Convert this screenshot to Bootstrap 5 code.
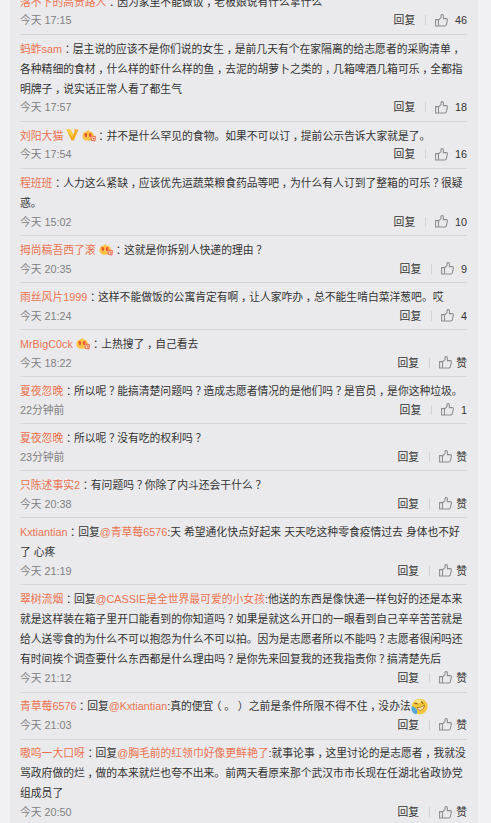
<!DOCTYPE html>
<html lang="zh-CN">
<head>
<meta charset="utf-8">
<meta name="viewport" content="width=device-width, initial-scale=1">
<title>评论</title>
<link href="https://cdn.jsdelivr.net/npm/bootstrap@5.3.0/dist/css/bootstrap.min.css" rel="stylesheet">
<style>
html,body{height:823px;overflow:hidden}
body{background:#f1f1f3;color:#333;font:10.8px/20.1px "Liberation Sans","Noto Sans CJK SC",sans-serif}
.feed{width:468px;height:823px;margin-left:10px;padding:0 11px 0 10px;background:#eaeaec;overflow:hidden}
.comments{margin-top:-13px}
.comment{border-top:1px solid #d6d6d9;padding:3.5px 0 5px;white-space:nowrap}
.comment p{line-height:20.1px}
.comment a{color:#eb7350;text-decoration:none}
/* punctuation: half-width glyph in the middle of a full cell */
.comment i{display:inline-block;width:1em;line-height:1;text-align:center;font-style:normal;font-feature-settings:"halt"}
.comment i.stop{text-align:left}
.meta{height:17.42px;line-height:18px}
.meta time{color:#808080}
.sep{width:1px;height:10px;background:#d3d3d6;margin:0 8.5px 0 10px}
.thumb{width:13px;height:13px;fill:none;stroke:#8c8c8c;stroke-width:1.05}
.num{margin-left:7.3px}
.zan{margin-left:4.7px}
.vip{width:13px;height:12px;margin:0 -.8px 0 2.7px;vertical-align:-1.5px}
.flag{width:14px;height:13px;margin-left:3.6px;vertical-align:-2px}
.emoji{width:17px;height:17px;vertical-align:-4.5px}
</style>
</head>
<body>
<svg class="d-none" xmlns="http://www.w3.org/2000/svg">
<symbol id="like" viewBox="0 0 13 13"><path d="M.6 5.6h2.9v6.3H.6zM3.5 6L6 3.6V1.4Q6.2.6 7.1.6 8.4.7 8.4 2.2V4.6h2.9q1.3.1 1.1 1.3l-1 4.8q-.3 1.2-1.4 1.2H3.5"/></symbol>
<symbol id="vmark" viewBox="0 0 12 12"><path fill="#f7a916" d="M0 .5h4.2L6.5 6l1.7-3.3L7.4.5H12L7.2 11.5H5z"/><path fill="#ffcb42" d="M0 .5h4.2L6.5 6 5.8 9z"/></symbol>
<symbol id="badge-hot" viewBox="0 0 15 13"><path fill="#ffc34a" d="M5.4 2L6.6.4 7.8 2q5 .5 5 5.2 0 5-6.2 5T.4 7.2Q.6 2.4 5.4 2z"/><path fill="#e95431" d="M2.8 4q1.6-.8 2.7.8.4 2.8-1 3.6-2-.6-1.7-4.4zM7.4 4.8q1.2-1.5 2.6-.7.4 3-1.4 4.3-1.6-.8-1.2-3.6z"/><path fill="#fff0ce" stroke="#ed5a40" d="M9.3 7.2l5 .3-.4 4.9-3.7-.6z"/><path fill="none" stroke="#e8463a" d="M11 9l2 .5-.3 1.5"/></symbol>
</svg>
<main class="feed">
<div class="comments">
<article class="comment"><p class="m-0"><a href="#">落不下的高贵路人</a><i>：</i>因为家里不能做饭<i>，</i>老板娘说有什么拿什么</p>
<div class="meta d-flex align-items-center"><time class="me-auto">今天 17:15</time><span>回复</span><span class="sep"></span><svg class="thumb"><use href="#like"/></svg><span class="num">46</span></div></article>
<article class="comment"><p class="m-0"><a href="#">蚂蚱sam</a><i>：</i>层主说的应该不是你们说的女生<i>，</i>是前几天有个在家隔离的给志愿者的采购清单<i>，</i><br>各种精细的食材<i>，</i>什么样的虾什么样的鱼<i>，</i>去泥的胡萝卜之类的<i>，</i>几箱啤酒几箱可乐<i>，</i>全都指<br>明牌子<i>，</i>说实话正常人看了都生气</p>
<div class="meta d-flex align-items-center"><time class="me-auto">今天 17:57</time><span>回复</span><span class="sep"></span><svg class="thumb"><use href="#like"/></svg><span class="num">18</span></div></article>
<article class="comment"><p class="m-0"><a href="#">刘阳大猫</a><svg class="vip"><use href="#vmark"/></svg><svg class="flag"><use href="#badge-hot"/></svg><i>：</i>并不是什么罕见的食物。如果不可以订<i>，</i>提前公示告诉大家就是了。</p>
<div class="meta d-flex align-items-center"><time class="me-auto">今天 17:54</time><span>回复</span><span class="sep"></span><svg class="thumb"><use href="#like"/></svg><span class="num">16</span></div></article>
<article class="comment"><p class="m-0"><a href="#">程班班</a><i>：</i>人力这么紧缺<i>，</i>应该优先运蔬菜粮食药品等吧<i>，</i>为什么有人订到了整箱的可乐<i>？</i>很疑<br>惑。</p>
<div class="meta d-flex align-items-center"><time class="me-auto">今天 15:02</time><span>回复</span><span class="sep"></span><svg class="thumb"><use href="#like"/></svg><span class="num">10</span></div></article>
<article class="comment"><p class="m-0"><a href="#">拇尚稿吾西了滚</a><svg class="flag"><use href="#badge-hot"/></svg><i>：</i>这就是你拆别人快递的理由<i>？</i></p>
<div class="meta d-flex align-items-center"><time class="me-auto">今天 20:35</time><span>回复</span><span class="sep"></span><svg class="thumb"><use href="#like"/></svg><span class="num">9</span></div></article>
<article class="comment"><p class="m-0"><a href="#">雨丝风片1999</a><i>：</i>这样不能做饭的公寓肯定有啊<i>，</i>让人家咋办<i>，</i>总不能生啃白菜洋葱吧。哎</p>
<div class="meta d-flex align-items-center"><time class="me-auto">今天 21:24</time><span>回复</span><span class="sep"></span><svg class="thumb"><use href="#like"/></svg><span class="num">4</span></div></article>
<article class="comment"><p class="m-0"><a href="#">MrBigC0ck</a><svg class="flag"><use href="#badge-hot"/></svg><i>：</i>上热搜了<i>，</i>自己看去</p>
<div class="meta d-flex align-items-center"><time class="me-auto">今天 18:22</time><span>回复</span><span class="sep"></span><svg class="thumb"><use href="#like"/></svg><span class="zan">赞</span></div></article>
<article class="comment"><p class="m-0"><a href="#">夏夜忽晚</a><i>：</i>所以呢<i>？</i>能搞清楚问题吗<i>？</i>造成志愿者情况的是他们吗<i>？</i>是官员<i>，</i>是你这种垃圾。</p>
<div class="meta d-flex align-items-center"><time class="me-auto">22分钟前</time><span>回复</span><span class="sep"></span><svg class="thumb"><use href="#like"/></svg><span class="num">1</span></div></article>
<article class="comment"><p class="m-0"><a href="#">夏夜忽晚</a><i>：</i>所以呢<i>？</i>没有吃的权利吗<i>？</i></p>
<div class="meta d-flex align-items-center"><time class="me-auto">23分钟前</time><span>回复</span><span class="sep"></span><svg class="thumb"><use href="#like"/></svg><span class="zan">赞</span></div></article>
<article class="comment"><p class="m-0"><a href="#">只陈述事实2</a><i>：</i>有问题吗<i>？</i>你除了内斗还会干什么<i>？</i></p>
<div class="meta d-flex align-items-center"><time class="me-auto">今天 20:38</time><span>回复</span><span class="sep"></span><svg class="thumb"><use href="#like"/></svg><span class="zan">赞</span></div></article>
<article class="comment"><p class="m-0"><a href="#">Kxtiantian</a><i>：</i>回复<a href="#">@青草莓6576</a>:天 希望通化快点好起来 天天吃这种零食疫情过去 身体也不好<br>了 心疼</p>
<div class="meta d-flex align-items-center"><time class="me-auto">今天 21:19</time><span>回复</span><span class="sep"></span><svg class="thumb"><use href="#like"/></svg><span class="zan">赞</span></div></article>
<article class="comment"><p class="m-0"><a href="#">翠树流烟</a><i>：</i>回复<a href="#">@CASSIE是全世界最可爱的小女孩</a>:他送的东西是像快递一样包好的还是本来<br>就是这样装在箱子里开口能看到的你知道吗<i>？</i>如果是就这么开口的一眼看到自己辛辛苦苦就是<br>给人送零食的为什么不可以抱怨为什么不可以拍。因为是志愿者所以不能吗<i>？</i>志愿者很闲吗还<br>有时间挨个调查要什么东西都是什么理由吗<i>？</i>是你先来回复我的还我指责你<i>？</i>搞清楚先后</p>
<div class="meta d-flex align-items-center"><time class="me-auto">今天 21:12</time><span>回复</span><span class="sep"></span><svg class="thumb"><use href="#like"/></svg><span class="zan">赞</span></div></article>
<article class="comment"><p class="m-0"><a href="#">青草莓6576</a><i>：</i>回复<a href="#">@Kxtiantian</a>:真的便宜<i>（</i><i class="stop">。</i><i>）</i> 之前是条件所限不得不住<i>，</i>没办法<svg class="emoji my-n1" viewBox="0 0 17 17"><circle cx="8.8" cy="8.5" r="7.8" fill="#f5c63a"/><path fill="#ffe58a" d="M3 4Q8-1 13 3l-4 2z"/><path fill="none" stroke="#8a5b16" stroke-width="1.2" d="M3.5 5l3.2 1M10 3.4l2.3 2.2"/><path fill="#fbe9b8" stroke="#a86f20" stroke-width=".8" d="M6 9.5q4 .5 7.5-2.5 0 4.5-3.8 5.3Q6.5 12.5 6 9.5z"/><path fill="#58a8d7" d="M.4 8.5Q4 8 6 12q1 3-1 4.5Q-.2 14.5.4 8.5z"/></svg></p>
<div class="meta d-flex align-items-center"><time class="me-auto">今天 21:03</time><span>回复</span><span class="sep"></span><svg class="thumb"><use href="#like"/></svg><span class="zan">赞</span></div></article>
<article class="comment"><p class="m-0"><a href="#">嗷呜一大口呀</a><i>：</i>回复<a href="#">@胸毛前的红领巾好像更鲜艳了</a>:就事论事<i>，</i>这里讨论的是志愿者<i>，</i>我就没<br>骂政府做的烂<i>，</i>做的本来就烂也夸不出来。前两天看原来那个武汉市市长现在任湖北省政协党<br>组成员了</p>
<div class="meta d-flex align-items-center"><time class="me-auto">今天 20:50</time><span>回复</span><span class="sep"></span><svg class="thumb"><use href="#like"/></svg><span class="zan">赞</span></div></article>
</div>
</main>
<script src="https://cdn.jsdelivr.net/npm/bootstrap@5.3.0/dist/js/bootstrap.bundle.min.js"></script>
</body>
</html>
